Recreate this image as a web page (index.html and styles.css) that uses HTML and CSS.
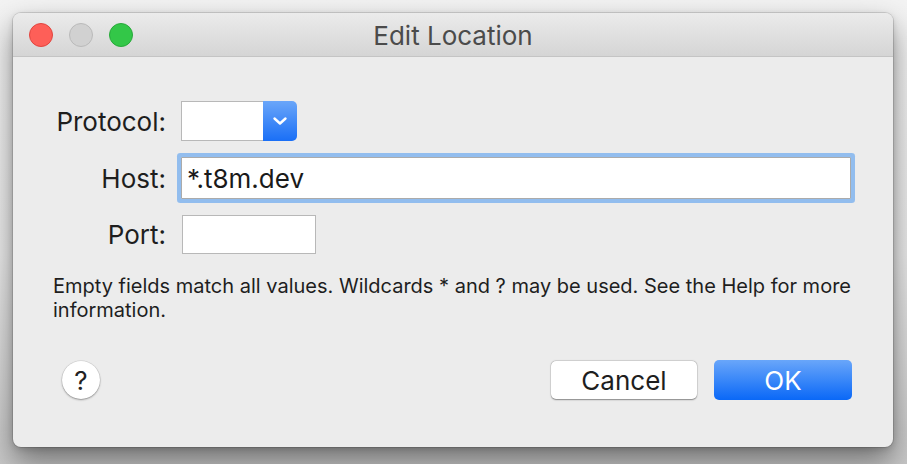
FILE: index.html
```html
<!DOCTYPE html>
<html>
<head>
<meta charset="utf-8">
<link rel="stylesheet" href="styles.css">
</head>
<body>
<div class="window">
  <div class="titlebar">
    <div class="lights">
      <span class="light red"></span>
      <span class="light gray"></span>
      <span class="light green"></span>
    </div>
    <div class="title">Edit Location</div>
  </div>
  <div class="content">
    <div class="form">
      <div class="label">Protocol:</div>
      <div class="field">
        <div class="select">
          <div class="select-box"></div>
          <div class="select-btn">
            <svg width="16" height="10" viewBox="0 0 16 10"><path d="M2.5 2.5 L8 7.5 L13.5 2.5" fill="none" stroke="#fff" stroke-width="2.4" stroke-linecap="round" stroke-linejoin="round"/></svg>
          </div>
        </div>
      </div>
      <div class="label">Host:</div>
      <div class="field"><div class="input host">*.t8m.dev</div></div>
      <div class="label">Port:</div>
      <div class="field"><div class="input port"></div></div>
    </div>
    <p class="hint">Empty fields match all values. Wildcards * and ? may be used. See the Help for more information.</p>
    <div class="actions">
      <div class="help">?</div>
      <div class="buttons">
        <div class="btn cancel">Cancel</div>
        <div class="btn ok">OK</div>
      </div>
    </div>
  </div>
</div>
</body>
</html>
```
FILE: styles.css
```css
html, body {
  margin: 0;
  height: 100%;
}
body {
  padding: 13px 14px 0 13px;
  box-sizing: border-box;
  background: linear-gradient(to bottom, #f3f3f3 0%, #ebebeb 55%, #c8c8c8 100%);
  font-family: "Inter", "Liberation Sans", sans-serif;
  overflow: hidden;
}
.window {
  width: 880px;
  height: 434px;
  background: #ececec;
  border-radius: 8px;
  box-shadow: 0 0 0 1px rgba(0,0,0,0.12), 0 14px 30px rgba(0,0,0,0.45), 0 2px 6px rgba(0,0,0,0.15);
  overflow: hidden;
  display: flex;
  flex-direction: column;
}
.titlebar {
  height: 44px;
  box-sizing: border-box;
  border-bottom: 1px solid #c4c4c4;
  background: linear-gradient(to bottom, #ebebeb, #d5d5d5);
  display: grid;
  grid-template-columns: 1fr;
  align-items: center;
}
.lights {
  grid-area: 1 / 1;
  display: flex;
  gap: 16px;
  padding-left: 16px;
  margin-top: 1px;
}
.light {
  width: 24px;
  height: 24px;
  border-radius: 50%;
  box-sizing: border-box;
}
.red { background: #fe5f58; border: 1px solid #e1453f; }
.gray { background: #d1d1d1; border: 1px solid #bababa; }
.green { background: #33c748; border: 1px solid #28a93a; }
.title {
  grid-area: 1 / 1;
  text-align: center;
  font-size: 26px;
  color: #4b4b4b;
  margin-top: 2px;
}
.content {
  padding: 44px 41px 0 40px;
}
.form {
  display: grid;
  grid-template-columns: 113px 1fr;
  column-gap: 15px;
  row-gap: 16px;
  align-items: center;
}
.label {
  text-align: right;
  font-size: 26px;
  color: #1e1e1e;
}
.field { display: flex; }
.select {
  display: flex;
  height: 40px;
}
.select-box {
  width: 82px;
  box-sizing: border-box;
  background: #fff;
  border: 1px solid #b8b8b8;
  border-right: none;
}
.select-btn {
  width: 34px;
  background: linear-gradient(to bottom, #6aa6f9, #1a6ff6);
  border-radius: 0 5px 5px 0;
  display: flex;
  align-items: center;
  justify-content: center;
}
.input {
  box-sizing: border-box;
  background: #fff;
  border: 1px solid #ababab;
  font-size: 26px;
  color: #1a1a1a;
  display: flex;
  align-items: center;
}
.host {
  width: 670px;
  height: 42px;
  padding-left: 5px;
  box-shadow: 0 0 0 4px #92bdee;
  border-radius: 1px;
}
.port {
  width: 134px;
  height: 39px;
  margin-left: 1px;
  border-color: #b8b8b8;
}
.hint {
  margin: 20px 0 0 0;
  font-size: 20px;
  line-height: 24px;
  color: #1e1e1e;
}
.actions {
  margin-top: 38px;
  display: flex;
  justify-content: space-between;
  align-items: center;
}
.help {
  width: 38px;
  height: 38px;
  margin-left: 9px;
  border-radius: 50%;
  background: #fff;
  box-shadow: 0 1px 2px rgba(0,0,0,0.35), 0 0 0 0.5px rgba(0,0,0,0.12);
  display: flex;
  align-items: center;
  justify-content: center;
  font-size: 26px;
  color: #222;
}
.buttons {
  display: flex;
  gap: 17px;
  align-items: center;
}
.btn {
  display: flex;
  align-items: center;
  justify-content: center;
  font-size: 26px;
  border-radius: 5px;
  box-sizing: border-box;
}
.cancel {
  width: 146px;
  height: 38px;
  background: #fff;
  color: #1e1e1e;
  box-shadow: 0 0.5px 1.5px rgba(0,0,0,0.4), 0 0 0 0.5px rgba(0,0,0,0.1);
}
.ok {
  width: 138px;
  height: 40px;
  background: linear-gradient(to bottom, #69a6fa, #0a68f7);
  color: #fff;
}
```
